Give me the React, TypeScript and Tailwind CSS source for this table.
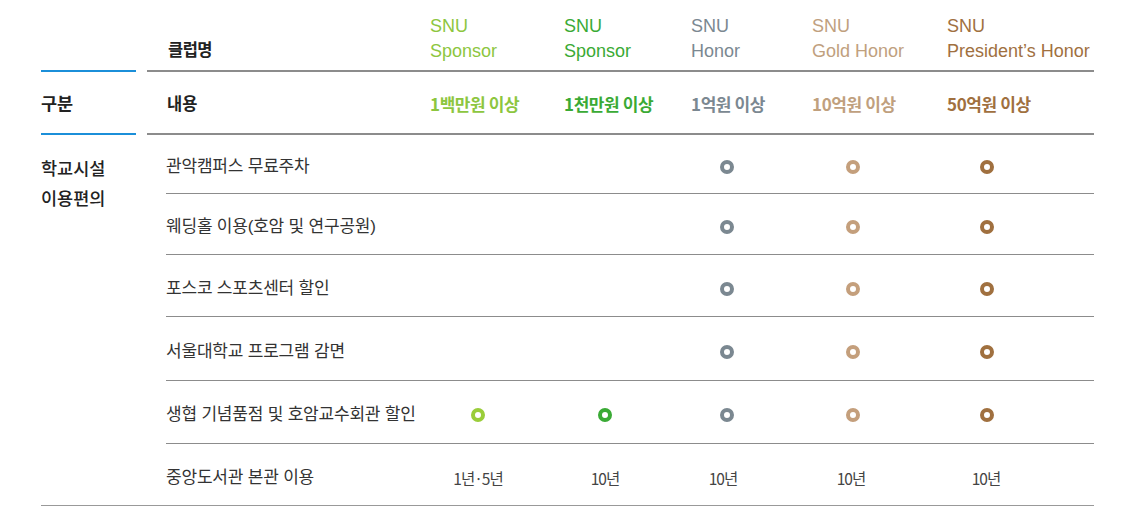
const tiers = [
  { top: "SNU", name: "Sponsor", amount: "1백만원 이상", color: "text-[#8dc63f]", dot: "border-[#9acd3a]", width: "w-[134px]", dotAt: "ml-[41px]", textAt: "ml-[42px]" },
  { top: "SNU", name: "Sponsor", amount: "1천만원 이상", color: "text-[#3aaa35]", dot: "border-[#3aaa35]", width: "w-[127px]", dotAt: "ml-[34px]", textAt: "ml-[35px]" },
  { top: "SNU", name: "Honor", amount: "1억원 이상", color: "text-[#7b8891]", dot: "border-[#7b8891]", width: "w-[121px]", dotAt: "ml-[29px]", textAt: "ml-[26px]" },
  { top: "SNU", name: "Gold Honor", amount: "10억원 이상", color: "text-[#c0a07e]", dot: "border-[#c49f7c]", width: "w-[135px]", dotAt: "ml-[34px]", textAt: "ml-[33px]" },
  { top: "SNU", name: "President’s Honor", amount: "50억원 이상", color: "text-[#a0703f]", dot: "border-[#a0703f]", width: "w-[147px]", dotAt: "ml-[33px]", textAt: "ml-[33px]" },
];

type Cell = boolean | string;

const rows: { label: string; cells: Cell[]; height: string }[] = [
  { label: "관악캠퍼스 무료주차", cells: [false, false, true, true, true], height: "h-[59px]" },
  { label: "웨딩홀 이용(호암 및 연구공원)", cells: [false, false, true, true, true], height: "h-[61px]" },
  { label: "포스코 스포츠센터 할인", cells: [false, false, true, true, true], height: "h-[62px]" },
  { label: "서울대학교 프로그램 감면", cells: [false, false, true, true, true], height: "h-[64px]" },
  { label: "생협 기념품점 및 호암교수회관 할인", cells: [true, true, true, true, true], height: "h-[63px]" },
  { label: "중앙도서관 본관 이용", cells: ["1년·5년", "10년", "10년", "10년", "10년"], height: "h-[61px]" },
];

const Dot = ({ color }: { color: string }) => (
  <span className={`block w-[14px] h-[14px] rounded-full border-[4.5px] bg-white ${color}`} />
);

const App = () => {
  return (
    <div className="w-[1140px] h-[506px] bg-white pl-[41px] pr-[46px] font-['Liberation_Sans','Noto_Sans_CJK_KR',sans-serif] text-[#333]">
      <div className="grid grid-cols-[95px_947px] gap-x-[11px] border-b-2 border-[#999]">
        {/* header: club name */}
        <div className="h-[72px] border-b-2 border-[#1b8fd9]" />
        <div className="h-[72px] border-b-2 border-[#8c8c8c] flex items-end pb-[6px]">
          <div className="w-[283px] pl-[21px] pb-[1px] text-[16.5px] font-semibold text-[#222] tracking-[-0.5px]">
            클럽명
          </div>
          {tiers.map((t, i) => (
            <div key={i} className={`${t.width} ${t.color} text-[18px] leading-[25px]`}>
              <div>{t.top}</div>
              <div className="whitespace-nowrap">{t.name}</div>
            </div>
          ))}
        </div>

        {/* header: amount */}
        <div className="h-[63px] pt-[3px] border-b-2 border-[#1b8fd9] flex items-center text-[17.5px] font-semibold text-[#222]">
          구분
        </div>
        <div className="h-[63px] pt-[3px] border-b-2 border-[#8c8c8c] flex items-center">
          <div className="w-[283px] pl-[20px] text-[16.5px] font-semibold text-[#222]">내용</div>
          {tiers.map((t, i) => (
            <div
              key={i}
              className={`${t.width} ${t.color} text-[17px] font-semibold tracking-[-0.4px] whitespace-nowrap font-['Noto_Sans_CJK_KR',sans-serif]`}
            >
              {t.amount}
            </div>
          ))}
        </div>

        {/* body */}
        <div className="pt-[19px] text-[17.5px] font-medium leading-[30px] text-[#222]">
          <div>학교시설</div>
          <div>이용편의</div>
        </div>
        <div className="pl-[19px]">
          {rows.map((r, ri) => (
            <div
              key={ri}
              className={`${r.height} flex items-center pt-[6px] ${ri < rows.length - 1 ? "border-b border-[#8c8c8c]" : ""}`}
            >
              <div className="w-[264px] text-[17px] tracking-[-0.2px] whitespace-nowrap">{r.label}</div>
              {tiers.map((t, ci) => {
                const c = r.cells[ci];
                return (
                  <div key={ci} className={`${t.width} flex`}>
                    {c === true && (
                      <div className={t.dotAt}>
                        <Dot color={t.dot} />
                      </div>
                    )}
                    {typeof c === "string" && (
                      <div className={`${t.textAt} w-3 pt-[3px] flex justify-center`}>
                        <span className="whitespace-nowrap text-[15.5px] tracking-[-1px] text-[#444] font-['Noto_Sans_CJK_KR',sans-serif]">
                          {c}
                        </span>
                      </div>
                    )}
                  </div>
                );
              })}
            </div>
          ))}
        </div>
      </div>
    </div>
  );
};

export default App;
